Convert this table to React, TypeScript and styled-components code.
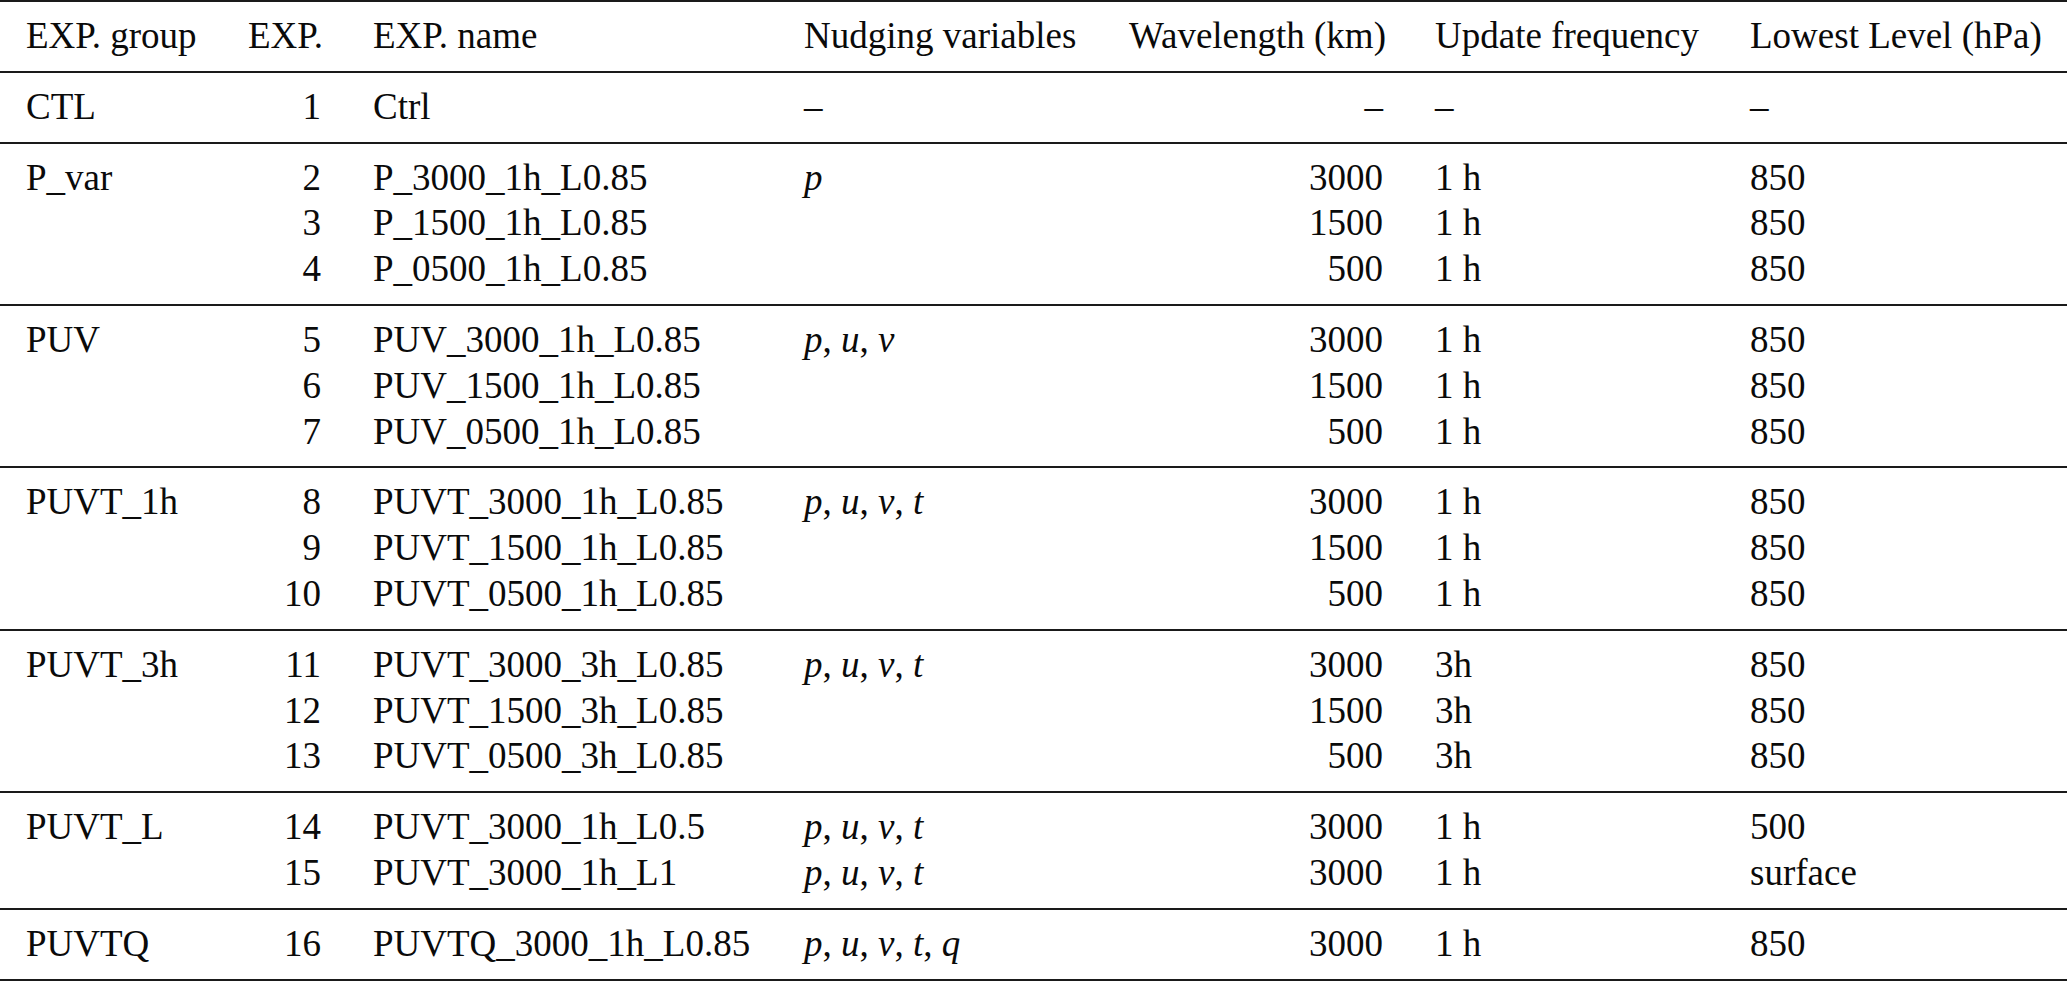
import React from 'react';
import styled, { createGlobalStyle } from 'styled-components';

const GlobalStyle = createGlobalStyle`
	html, body {
		margin: 0;
		padding: 0;
		background: #fff;
	}
	body {
		font-family: 'Liberation Serif', 'Times New Roman', serif;
		color: #0a0a0a;
	}
`;

type Row = {
	exp: number;
	name: string;
	vars?: string[];
	wave: string;
	freq: string;
	level: string;
};

type Group = {
	label: string;
	rows: Row[];
};

const PUVT = [ 'p', 'u', 'v', 't' ];

const GROUPS: Group[] = [
	{
		label: 'CTL',
		rows: [ { exp: 1, name: 'Ctrl', wave: '–', freq: '–', level: '–' } ],
	},
	{
		label: 'P_var',
		rows: [
			{ exp: 2, name: 'P_3000_1h_L0.85', vars: [ 'p' ], wave: '3000', freq: '1 h', level: '850' },
			{ exp: 3, name: 'P_1500_1h_L0.85', wave: '1500', freq: '1 h', level: '850' },
			{ exp: 4, name: 'P_0500_1h_L0.85', wave: '500', freq: '1 h', level: '850' },
		],
	},
	{
		label: 'PUV',
		rows: [
			{ exp: 5, name: 'PUV_3000_1h_L0.85', vars: [ 'p', 'u', 'v' ], wave: '3000', freq: '1 h', level: '850' },
			{ exp: 6, name: 'PUV_1500_1h_L0.85', wave: '1500', freq: '1 h', level: '850' },
			{ exp: 7, name: 'PUV_0500_1h_L0.85', wave: '500', freq: '1 h', level: '850' },
		],
	},
	{
		label: 'PUVT_1h',
		rows: [
			{ exp: 8, name: 'PUVT_3000_1h_L0.85', vars: PUVT, wave: '3000', freq: '1 h', level: '850' },
			{ exp: 9, name: 'PUVT_1500_1h_L0.85', wave: '1500', freq: '1 h', level: '850' },
			{ exp: 10, name: 'PUVT_0500_1h_L0.85', wave: '500', freq: '1 h', level: '850' },
		],
	},
	{
		label: 'PUVT_3h',
		rows: [
			{ exp: 11, name: 'PUVT_3000_3h_L0.85', vars: PUVT, wave: '3000', freq: '3h', level: '850' },
			{ exp: 12, name: 'PUVT_1500_3h_L0.85', wave: '1500', freq: '3h', level: '850' },
			{ exp: 13, name: 'PUVT_0500_3h_L0.85', wave: '500', freq: '3h', level: '850' },
		],
	},
	{
		label: 'PUVT_L',
		rows: [
			{ exp: 14, name: 'PUVT_3000_1h_L0.5', vars: PUVT, wave: '3000', freq: '1 h', level: '500' },
			{ exp: 15, name: 'PUVT_3000_1h_L1', vars: PUVT, wave: '3000', freq: '1 h', level: 'surface' },
		],
	},
	{
		label: 'PUVTQ',
		rows: [
			{ exp: 16, name: 'PUVTQ_3000_1h_L0.85', vars: [ ...PUVT, 'q' ], wave: '3000', freq: '1 h', level: '850' },
		],
	},
];

// column widths in px, summing to the page width
const COLUMNS = [ 222, 125, 431, 325, 306, 315, 343 ];
const ALIGN: ( 'left' | 'right' )[] = [ 'left', 'right', 'left', 'left', 'right', 'left', 'left' ];

const Table = styled.table`
	width: 2067px;
	table-layout: fixed;
	border-collapse: collapse;
	font-size: 37px;
	line-height: 45.8px;
	border-top: 2px solid #1a1a1a;
	border-bottom: 2px solid #1a1a1a;
`;

const Section = styled.tbody`
	border-top: 2px solid #1a1a1a;
`;

const Head = styled.thead``;

const Cell = styled.td< { $align: 'left' | 'right'; $first?: boolean; $last?: boolean } >`
	padding: ${ ( p ) => ( p.$first ? '11px' : '0' ) } 26px
		${ ( p ) => ( p.$last ? '12px' : '0' ) };
	text-align: ${ ( p ) => p.$align };
	font-weight: normal;
	white-space: nowrap;
	vertical-align: top;
`;

const HeadCell = styled( Cell ).attrs( { as: 'th' } )``;

const Var = styled.i`
	font-style: italic;
`;

const Vars = ( { list }: { list: string[] } ) => (
	<>
		{ list.map( ( v, i ) => (
			<React.Fragment key={ v }>
				<Var>{ v }</Var>
				{ i < list.length - 1 ? ', ' : '' }
			</React.Fragment>
		) ) }
	</>
);

const HEADERS = [
	'EXP. group',
	'EXP.',
	'EXP. name',
	'Nudging variables',
	'Wavelength (km)',
	'Update frequency',
	'Lowest Level (hPa)',
];

export default function App() {
	return (
		<>
			<GlobalStyle />
			<Table>
				<colgroup>
					{ COLUMNS.map( ( w, i ) => (
						<col key={ i } style={ { width: w } } />
					) ) }
				</colgroup>
				<Head>
					<tr>
						{ HEADERS.map( ( h, i ) => (
							<HeadCell key={ h } $align={ ALIGN[ i ] } $first $last>
								{ h }
							</HeadCell>
						) ) }
					</tr>
				</Head>
				{ GROUPS.map( ( g ) => (
					<Section key={ g.label }>
						{ g.rows.map( ( r, i ) => {
							const first = i === 0;
							const last = i === g.rows.length - 1;
							const cells: React.ReactNode[] = [
								first ? g.label : '',
								r.exp,
								r.name,
								r.vars ? <Vars list={ r.vars } /> : first && g.label === 'CTL' ? '–' : '',
								r.wave,
								r.freq,
								r.level,
							];
							return (
								<tr key={ r.exp }>
									{ cells.map( ( c, j ) => (
										<Cell key={ j } $align={ ALIGN[ j ] } $first={ first } $last={ last }>
											{ c }
										</Cell>
									) ) }
								</tr>
							);
						} ) }
					</Section>
				) ) }
			</Table>
		</>
	);
}
